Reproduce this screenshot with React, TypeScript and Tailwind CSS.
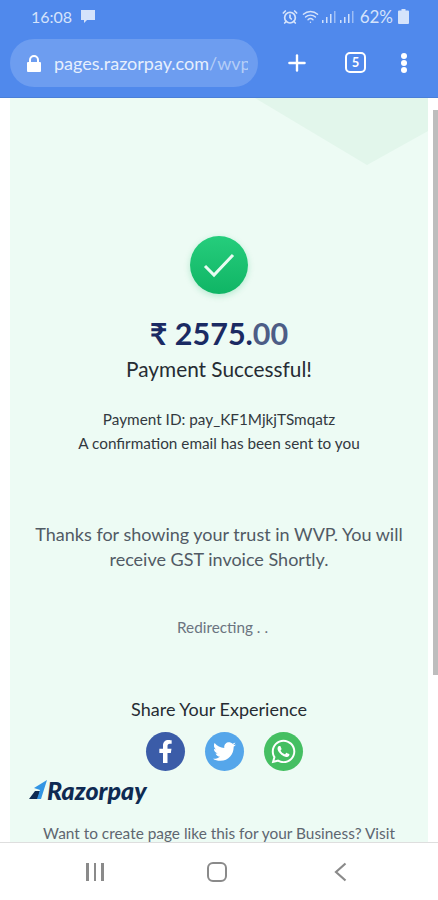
import React from "react";
import { FaFacebookF, FaTwitter, FaWhatsapp } from "react-icons/fa";
import { AlarmClock, Plus, Wifi } from "lucide-react";

const SignalBars = () => (
  <svg width="18" height="14" viewBox="0 0 18 14" fill="#cfe0fb">
    <rect x="1" y="10" width="1.5" height="3" />
    <rect x="5" y="7" width="1.5" height="6" />
    <rect x="9" y="4" width="1.5" height="9" />
    <rect x="13" y="1" width="1.5" height="12" opacity="0.6" />
  </svg>
);

const StatusBar = () => (
  <div className="flex h-[33px] items-center justify-between pl-[31px] pr-[29px] text-[#d5e3fb]">
    <div className="flex items-center gap-2">
      <span className="text-[16px] leading-none">16:08</span>
      <svg width="16" height="15" viewBox="0 0 16 15" fill="#d5e3fb">
        <path d="M1 1h14v10H7l-3 3v-3H1z" />
      </svg>
    </div>
    <div className="flex items-center">
      <AlarmClock size={16} strokeWidth={2.6} />
      <Wifi size={17} className="ml-[4px]" />
      <div className="ml-[2px] flex">
        <SignalBars />
        <SignalBars />
      </div>
      <span className="ml-[3px] text-[17px] leading-none">62%</span>
      <svg className="ml-[5px]" width="11" height="15" viewBox="0 0 11 15" fill="#d5e3fb">
        <path d="M3.5 0h4v1.5H10a1 1 0 0 1 1 1V14a1 1 0 0 1-1 1H1a1 1 0 0 1-1-1V2.500a1 1 0 0 1 1-1h2.500z" />
      </svg>
    </div>
  </div>
);

const AddressBar = () => (
  <div className="flex h-[65px] items-start pl-[10px]">
    <div className="mt-[6px] flex h-[48px] w-[248px] items-center rounded-full bg-[#6d9df0] pl-[17px] pr-[10px]">
      <svg width="14" height="17" viewBox="0 0 14 17" fill="#ffffff" className="shrink-0">
        <path d="M2 7V5a5 5 0 0 1 10 0v2h1a1 1 0 0 1 1 1v8a1 1 0 0 1-1 1H1a1 1 0 0 1-1-1V8a1 1 0 0 1 1-1zm2 0h6V5a3 3 0 0 0-6 0z" />
      </svg>
      <span className="ml-[13px] min-w-0 overflow-hidden whitespace-nowrap text-[18px] text-[#e6effd]">
        pages.razorpay.com<span className="text-[#b4cdf7]">/wvpay</span>
      </span>
    </div>
    <Plus size={26} strokeWidth={2.2} className="ml-[26px] mt-[17px] text-white" />
    <div className="ml-[35px] mt-[19px] flex h-[21px] w-[21px] items-center justify-center rounded-[5px] border-2 border-white text-[13px] font-bold text-white">
      5
    </div>
    <div className="ml-[35px] mt-[20px] flex flex-col gap-[1px]">
      <span className="h-[6px] w-[6px] rounded-full bg-white" />
      <span className="h-[6px] w-[6px] rounded-full bg-white" />
      <span className="h-[6px] w-[6px] rounded-full bg-white" />
    </div>
  </div>
);

const SocialIcon = ({ bg, children }: { bg: string; children: React.ReactNode }) => (
  <div className={`flex h-[39px] w-[39px] items-center justify-center rounded-full text-white ${bg}`}>
    {children}
  </div>
);

export default function App() {
  return (
    <div className="flex h-[900px] w-[438px] flex-col overflow-hidden bg-white font-['Lato','Noto_Sans',sans-serif]">
      <header className="h-[98px] shrink-0 border-b border-[#4a7fd8] bg-[#5089ec]">
        <StatusBar />
        <AddressBar />
      </header>

      <main className="relative min-h-0 flex-1 overflow-hidden">
        <div className="relative mx-[10px] h-full overflow-hidden bg-[#edfbf4] text-center">
          {/* corner decoration */}
          <svg className="absolute right-0 top-0" width="173" height="68" viewBox="0 0 173 68" fill="#e2f6eb">
            <polygon points="0,0 173,0 173,33 112,67" />
          </svg>

          <div className="relative flex flex-col items-center pt-[138px]">
            <div className="flex h-[58px] w-[58px] items-center justify-center rounded-full bg-gradient-to-b from-[#25cd7c] to-[#0fb565] shadow-[0_2px_6px_rgba(16,180,100,0.25)]">
              <svg width="32" height="26" viewBox="0 0 32 26" fill="none" stroke="#e9fbf2" strokeWidth="3">
                <path d="M2 14l9 9L30 3" />
              </svg>
            </div>
            <div className="mt-[19px] text-[30.5px] font-bold leading-[40px] text-[#1a2a63]">
              ₹ 2575.<span className="text-[#4d5d86]">00</span>
            </div>
            <div className="mt-[2px] text-[20.8px] leading-[28px] text-[#262c33]">Payment Successful!</div>
            <div className="mt-[24px] text-[15.3px] leading-[24px] text-[#33393f]">
              <div>Payment ID: pay_KF1MjkjTSmqatz</div>
              <div>A confirmation email has been sent to you</div>
            </div>
            <div className="mt-[67px] w-[380px] text-[18px] leading-[25px] text-[#515a64]">
              Thanks for showing your trust in WVP. You will receive GST invoice Shortly.
            </div>
            <div className="ml-[7px] mt-[43px] text-[15.3px] leading-[24px] text-[#6b7480]">Redirecting . .</div>
            <div className="mt-[57px] text-[18px] leading-[26px] text-[#262c33]">Share Your Experience</div>
            <div className="ml-[10px] mt-[10px] flex gap-[20px]">
              <SocialIcon bg="bg-[#3b5ca8]">
                <FaFacebookF size={23} />
              </SocialIcon>
              <SocialIcon bg="bg-[#55a6ea]">
                <FaTwitter size={23} />
              </SocialIcon>
              <SocialIcon bg="bg-[#45bf62]">
                <FaWhatsapp size={27} />
              </SocialIcon>
            </div>
            <div className="mt-[5px] flex items-center self-start pl-[19px]">
              <svg width="18" height="24" viewBox="0 0 18 24">
                <polygon points="0,21 6,13 11,13 9,21" fill="#0f2a52" />
                <polygon points="5,10 18,2 12,21 8,21 11,12" fill="#3395e4" />
              </svg>
              <span className="text-[25px] font-black italic leading-[28px] text-[#0f2a52]">Razorpay</span>
            </div>
            <div className="mt-[18px] whitespace-nowrap text-[15.4px] leading-[22px] text-[#5e6670]">
              Want to create page like this for your Business? Visit
            </div>
          </div>
        </div>
        {/* scrollbar */}
        <div className="absolute right-0 top-[12px] h-[565px] w-[5px] bg-[#bdbdbd]" />
      </main>

      <nav className="flex h-[58px] shrink-0 items-center border-t border-[#dedede] bg-white">
        <div className="ml-[86px] flex gap-[5px]">
          <span className="h-[18px] w-[2.500px] bg-[#8a8a8a]" />
          <span className="h-[18px] w-[2.500px] bg-[#8a8a8a]" />
          <span className="h-[18px] w-[2.500px] bg-[#8a8a8a]" />
        </div>
        <div className="ml-[103px] h-[20px] w-[20px] rounded-[6px] border-[2.500px] border-[#8a8a8a]" />
        <svg className="ml-[107px]" width="13" height="20" viewBox="0 0 13 20" fill="none" stroke="#8a8a8a" strokeWidth="2.200">
          <path d="M11.500 1.500L2 10l9.500 8.500" />
        </svg>
      </nav>
    </div>
  );
}
